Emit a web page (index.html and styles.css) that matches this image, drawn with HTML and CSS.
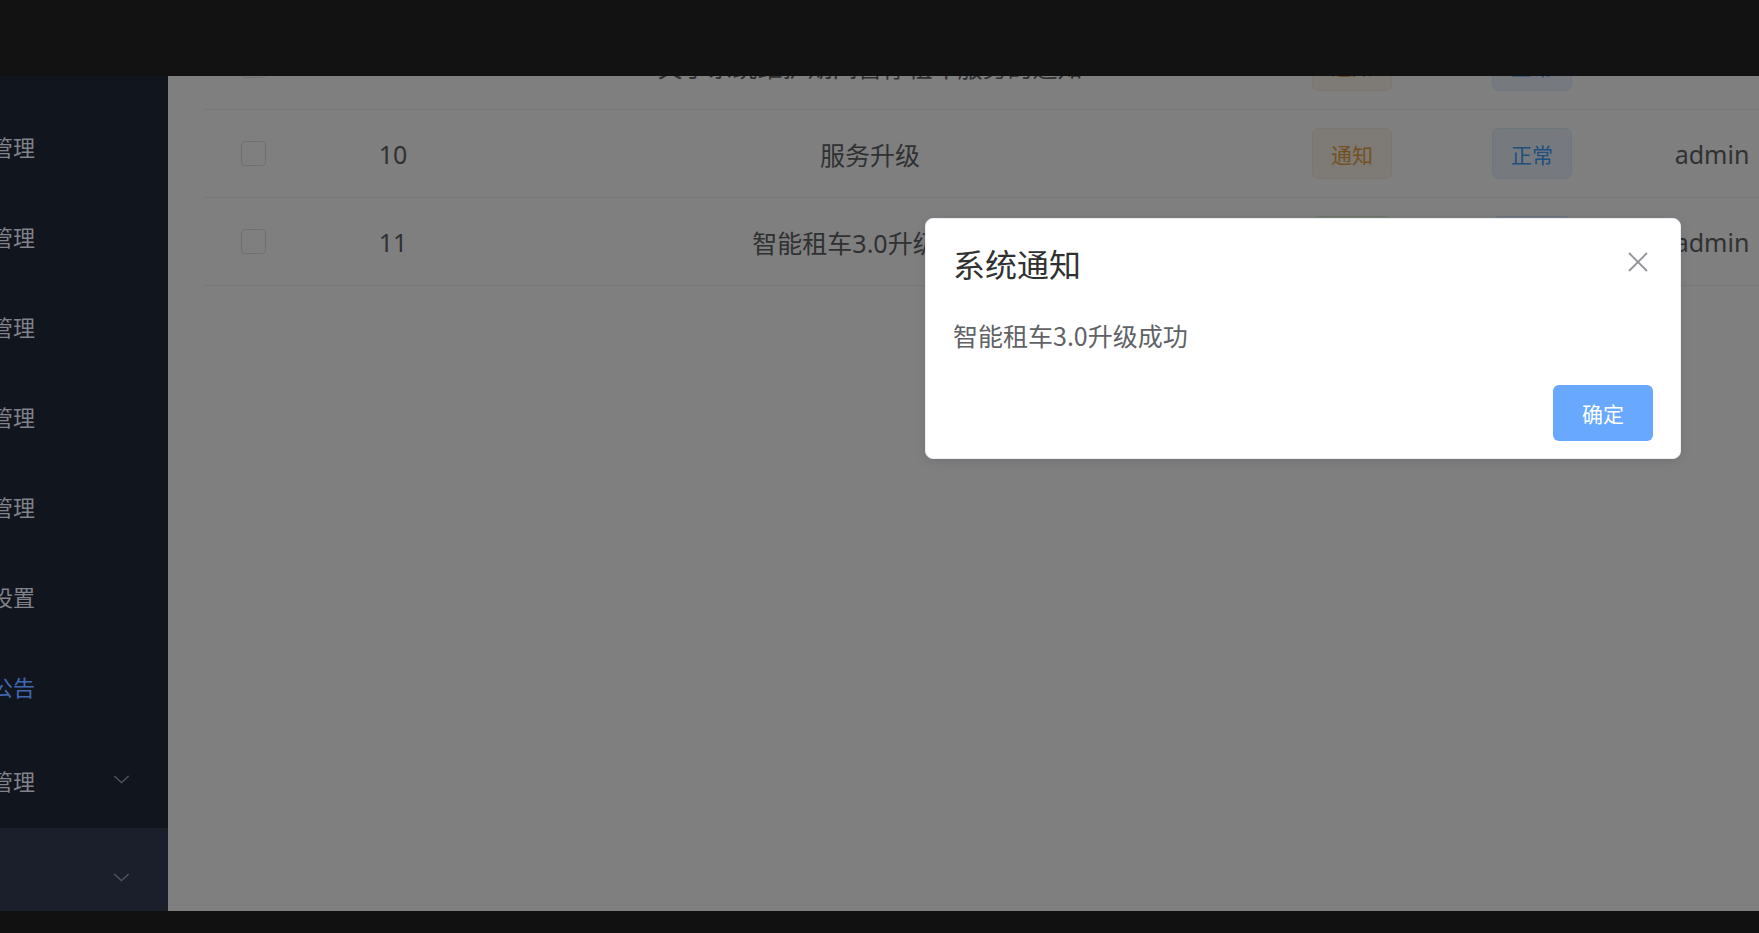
FILE: index.html
```html
<!DOCTYPE html>
<html lang="zh-CN">
<head>
  <meta charset="UTF-8">
  <meta name="viewport" content="width=device-width, initial-scale=1.0">
  <title>系统公告</title>
  <link rel="stylesheet" href="styles.css">
</head>
<body>
  <div class="topbar"></div>

  <div class="layout">
    <aside class="sidebar">
      <ul class="menu">
        <li class="menu-item"><span class="menu-title"><span>用户管理</span></span></li>
        <li class="menu-item"><span class="menu-title"><span>车辆管理</span></span></li>
        <li class="menu-item"><span class="menu-title"><span>订单管理</span></span></li>
        <li class="menu-item"><span class="menu-title"><span>品牌管理</span></span></li>
        <li class="menu-item"><span class="menu-title"><span>门店管理</span></span></li>
        <li class="menu-item"><span class="menu-title"><span>系统设置</span></span></li>
        <li class="menu-item active"><span class="menu-title"><span>系统公告</span></span></li>
        <li class="menu-item submenu">
          <span class="menu-title"><span>日志管理</span></span>
          <svg class="arrow" viewBox="0 0 18 10"><path d="M1 1 L9 8.5 L17 1" /></svg>
        </li>
        <li class="menu-item submenu hover">
          <span class="menu-title"></span>
          <svg class="arrow" viewBox="0 0 18 10"><path d="M1 1 L9 8.5 L17 1" /></svg>
        </li>
      </ul>
    </aside>

    <main class="main">
      <div class="table">
        <div class="row">
          <div class="cell"><span class="checkbox"></span></div>
          <div class="cell">9</div>
          <div class="cell">关于系统维护期间暂停租车服务的通知</div>
          <div class="cell"><span class="tag warning">通知</span></div>
          <div class="cell"><span class="tag primary">正常</span></div>
          <div class="cell">admin</div>
        </div>
        <div class="row">
          <div class="cell"><span class="checkbox"></span></div>
          <div class="cell">10</div>
          <div class="cell">服务升级</div>
          <div class="cell"><span class="tag warning">通知</span></div>
          <div class="cell"><span class="tag primary">正常</span></div>
          <div class="cell">admin</div>
        </div>
        <div class="row">
          <div class="cell"><span class="checkbox"></span></div>
          <div class="cell">11</div>
          <div class="cell">智能租车3.0升级成功</div>
          <div class="cell"><span class="tag success">公告</span></div>
          <div class="cell"><span class="tag primary">正常</span></div>
          <div class="cell">admin</div>
        </div>
      </div>
      <div class="mask"></div>
    </main>
  </div>

  <div class="footer"></div>

  <div class="message-box">
    <div class="message-header">
      <span class="message-title">系统通知</span>
      <button class="close-btn" aria-label="关闭">
        <svg viewBox="0 0 22 22"><path d="M2 2 L20 20 M20 2 L2 20" /></svg>
      </button>
    </div>
    <div class="message-content">智能租车3.0升级成功</div>
    <div class="message-btns">
      <button class="btn-primary">确定</button>
    </div>
  </div>
</body>
</html>
```

FILE: styles.css
```css
* {
  box-sizing: border-box;
}
body {
  margin: 0;
  height: 933px;
  overflow: hidden;
  background: #121212;
  font-family: "Noto Sans", "Noto Sans CJK SC", sans-serif;
  position: relative;
}
.topbar {
  position: relative;
  z-index: 2;
  height: 76px;
  background: #121212;
}
.footer {
  height: 22px;
  background: #111111;
}
.layout {
  display: flex;
  height: 835px;
  overflow: hidden;
}

/* sidebar */
.sidebar {
  width: 168px;
  flex-shrink: 0;
  background: #11151e;
  overflow: hidden;
}
.menu {
  list-style: none;
  margin: 0;
  padding: 25px 0 0;
}
.menu-item {
  display: flex;
  align-items: center;
  height: 90px;
  font-family: "Noto Sans CJK SC", sans-serif;
  font-size: 22px;
  color: #808389;
}
.menu-item.active {
  color: #4169b3;
}
.menu-item.submenu {
  height: 97px;
}
.menu-item.hover {
  height: 98px;
  background: #1a1f2b;
}
.menu-title {
  display: flex;
  justify-content: flex-end;
  width: 35px;
  white-space: nowrap;
}
.arrow {
  width: 17px;
  height: 9px;
  margin-left: 78px;
  fill: none;
  stroke: #54575e;
  stroke-width: 1.5;
}

/* main */
.main {
  flex: 1;
  position: relative;
  background: #fff;
  overflow: hidden;
  padding-left: 36px;
}
.table {
  margin-top: -54px;
  width: 1700px;
  color: #606266;
  font-size: 25px;
}
.row {
  display: grid;
  grid-template-columns: 99px 180px 774px 190px 170px 190px 97px;
  height: 88px;
  border-bottom: 1px solid #ebeef5;
}
.cell {
  display: flex;
  align-items: center;
  justify-content: center;
  white-space: nowrap;
}
.checkbox {
  width: 25px;
  height: 25px;
  border: 1px solid #dcdfe6;
  border-radius: 4px;
  background: #fff;
}
.tag {
  display: inline-flex;
  align-items: center;
  height: 51px;
  padding: 0 18px;
  border: 1px solid;
  border-radius: 7px;
  font-family: "Noto Sans CJK SC", sans-serif;
  font-size: 21px;
}
.tag.warning {
  background: #fdf6ec;
  border-color: #faecd8;
  color: #e6a23c;
}
.tag.primary {
  background: #ecf5ff;
  border-color: #d9ecff;
  color: #409eff;
}
.tag.success {
  background: #f0f9eb;
  border-color: #e1f3d8;
  color: #67c23a;
}
.mask {
  position: absolute;
  inset: 0;
  background: rgba(0, 0, 0, 0.5);
}

/* message box */
.message-box {
  position: absolute;
  z-index: 3;
  left: 925px;
  top: 218px;
  width: 756px;
  background: #fff;
  border: 1px solid #ebeef5;
  border-radius: 8px;
  box-shadow: 0 2px 12px rgba(0, 0, 0, 0.1);
  padding-bottom: 17px;
  font-family: "Noto Sans CJK SC", sans-serif;
}
.message-header {
  position: relative;
  padding: 28px 27px 0;
}
.message-title {
  display: block;
  font-size: 32px;
  line-height: 32px;
  color: #303133;
}
.close-btn {
  position: absolute;
  top: 32px;
  right: 31px;
  width: 22px;
  height: 22px;
  padding: 0;
  border: none;
  background: none;
}
.close-btn svg {
  display: block;
  width: 22px;
  height: 22px;
  fill: none;
  stroke: #909399;
  stroke-width: 1.8;
}
.message-content {
  padding: 35px 27px 0;
  font-size: 25px;
  line-height: 43px;
  color: #606266;
}
.message-btns {
  padding: 28px 27px 0;
  text-align: right;
}
.btn-primary {
  width: 100px;
  height: 56px;
  border: none;
  border-radius: 6px;
  background: #68a8ff;
  color: #fff;
  font-family: "Noto Sans CJK SC", sans-serif;
  font-size: 21px;
}
```
